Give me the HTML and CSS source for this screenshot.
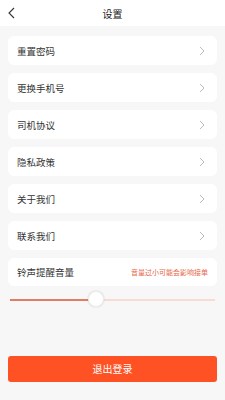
FILE: index.html
```html
<!DOCTYPE html>
<html>
<head>
  <meta charset="UTF-8">
  <title>设置</title>
  <link rel="stylesheet" href="styles.css">
</head>
<body>
  <div class="page">
    <div class="header">
      <span class="back">
        <svg width="7" height="12" viewBox="0 0 7 12"><polyline points="6,1 1,6 6,11" fill="none" stroke="#333" stroke-width="1.1"/></svg>
      </span>
      <h1>设置</h1>
    </div>

    <div class="list">
      <div class="row"><span>重置密码</span><svg class="chev" width="6" height="10" viewBox="0 0 6 10"><polyline points="1,1 5,5 1,9" fill="none" stroke="#bbb" stroke-width="1"/></svg></div>
      <div class="row"><span>更换手机号</span><svg class="chev" width="6" height="10" viewBox="0 0 6 10"><polyline points="1,1 5,5 1,9" fill="none" stroke="#bbb" stroke-width="1"/></svg></div>
      <div class="row"><span>司机协议</span><svg class="chev" width="6" height="10" viewBox="0 0 6 10"><polyline points="1,1 5,5 1,9" fill="none" stroke="#bbb" stroke-width="1"/></svg></div>
      <div class="row"><span>隐私政策</span><svg class="chev" width="6" height="10" viewBox="0 0 6 10"><polyline points="1,1 5,5 1,9" fill="none" stroke="#bbb" stroke-width="1"/></svg></div>
      <div class="row"><span>关于我们</span><svg class="chev" width="6" height="10" viewBox="0 0 6 10"><polyline points="1,1 5,5 1,9" fill="none" stroke="#bbb" stroke-width="1"/></svg></div>
      <div class="row"><span>联系我们</span><svg class="chev" width="6" height="10" viewBox="0 0 6 10"><polyline points="1,1 5,5 1,9" fill="none" stroke="#bbb" stroke-width="1"/></svg></div>
      <div class="row volume"><span>铃声提醒音量</span><span class="tip">音量过小可能会影响接单</span></div>
    </div>

    <div class="slider">
      <div class="track">
        <div class="fill" style="width: 42%"></div>
        <div class="thumb" style="left: 42%"></div>
      </div>
    </div>

    <button class="logout">退出登录</button>
  </div>
</body>
</html>
```

FILE: styles.css
```css
body {
  margin: 0;
  padding: 0;
  width: 225px;
  height: 400px;
  background: #f7f7f7;
  font-family: "Noto Sans CJK SC", "Noto Sans", sans-serif;
  color: #333;
  overflow: hidden;
}

.page {
  display: flex;
  flex-direction: column;
}

.header {
  height: 26px;
  background: #fff;
  display: flex;
  align-items: center;
  justify-content: center;
  position: relative;
}

.header h1 {
  margin: 0;
  font-size: 10px;
  font-weight: 400;
  color: #222;
}

.back {
  position: absolute;
  left: 8px;
  top: 7px;
  display: flex;
}

.list {
  display: flex;
  flex-direction: column;
  gap: 8px;
  padding: 10px 8px 0;
}

.row {
  height: 29px;
  background: #fff;
  border-radius: 6px;
  display: flex;
  align-items: center;
  justify-content: space-between;
  padding: 0 12px 0 9px;
  font-size: 9.5px;
  color: #333;
}

.row.volume {
  height: 28px;
  padding-right: 9px;
}

.tip {
  font-size: 7px;
  color: #e8684a;
}

.slider {
  padding: 13px 10px 0;
}

.track {
  position: relative;
  height: 1.5px;
  background: #f6dcd4;
}

.fill {
  height: 100%;
  background: #e07d64;
}

.thumb {
  position: absolute;
  top: -8px;
  width: 16px;
  height: 16px;
  margin-left: -8px;
  border-radius: 50%;
  background: #fff;
  box-shadow: 0 0 2px rgba(0, 0, 0, 0.15);
  border: 0.5px solid #eee;
  box-sizing: border-box;
}

.logout {
  margin: 55px 8px 0;
  height: 26px;
  border: none;
  border-radius: 3px;
  background: #ff5224;
  color: #fff;
  font-family: inherit;
  font-size: 10px;
  padding: 0;
}
```
